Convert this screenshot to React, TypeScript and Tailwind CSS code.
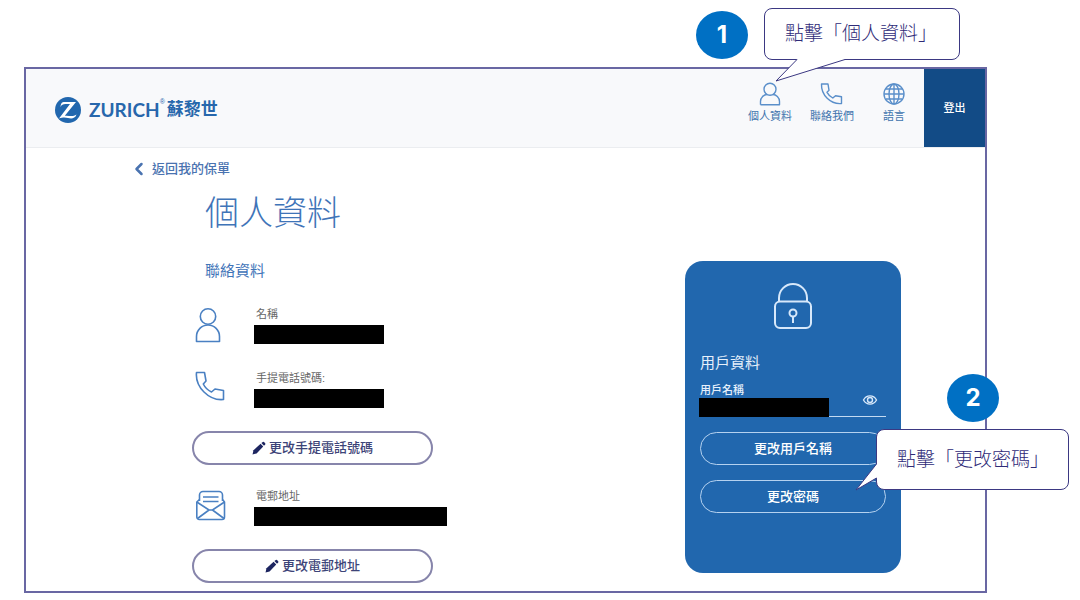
import { ChevronLeft } from "lucide-react";

export default function App() {
  return (
    <div className="bg-white pt-[67px] pl-6 pr-[93px] pb-[7px] font-['Liberation_Sans','Noto_Sans_CJK_TC',sans-serif]">
      <div className="relative border-2 border-[#6967a3]">
        <Header />

        <main className="pb-2">
          <a
            href="#policies"
            className="ml-[103px] mt-[11px] flex w-fit items-center gap-[3px] text-[13px] leading-5 font-medium text-[#4a73b0]"
          >
            <ChevronLeft className="size-5" strokeWidth={3} />
            返回我的保單
          </a>

          <h1 className="pl-[179px] mt-3 text-[34px] leading-11 font-light text-[#3f74b8]">
            個人資料
          </h1>

          <div className="flex justify-between items-start mt-[26px] pl-[166px] pr-21">
            <ContactDetails />
            <UserCard />
          </div>
        </main>

        <Step number={1} className="right-[237px] -top-[58px]" />
        <Callout
          className="right-[25px] -top-[61px] w-[196px] h-[52px]"
          text="點擊「個人資料」"
        >
          <svg
            className="absolute left-[10px] top-[49px] w-[72px] h-6"
            viewBox="0 0 72 24"
          >
            <path d="M22 0V1.5L1 23L70 1.5V0Z" fill="#fff" />
            <path d="M22 1.5L1 23L70 1.5" fill="none" stroke="#3b3882" />
          </svg>
        </Callout>

        <Step number={2} className="-right-[14px] top-[305px]" />
        <Callout
          className="-right-[84px] top-[360px] w-[193px] h-[61px]"
          text="點擊「更改密碼」"
        >
          <svg
            className="absolute -left-[22px] top-[33px] w-6 h-7"
            viewBox="0 0 24 28"
          >
            <path d="M24 1H21.5L1 27L21.5 15H24Z" fill="#fff" />
            <path d="M21.5 1L1 27L21.5 15" fill="none" stroke="#3b3882" />
          </svg>
        </Callout>
      </div>
    </div>
  );
}

function Header() {
  return (
    <header className="flex h-[79px] bg-[#f8f9fb] border-b border-[#ebedf0]">
      <div className="flex items-center grow pl-[29px] pt-1 text-[#2767ac]">
        <Logo />
        <span className="ml-2 font-['Lato'] text-[19px] leading-6 font-bold">
          ZURICH
        </span>
        <sup className="text-[7px] top-[-8px]">®</sup>
        <span className="ml-0.5 text-[17px] leading-6 font-bold">蘇黎世</span>
      </div>

      <nav className="flex items-start gap-[18px] mr-2 pt-[13px] text-[11px] leading-4 text-[#3f74ad]">
        <NavItem label="個人資料">
          <circle cx="12" cy="7.2" r="6" />
          <path d="M2.5 22.8V19.5C2.5 15.5 6 12.5 9 12.5M15 12.5C18 12.5 21.5 15.5 21.5 19.5V22.8H2.5" />
        </NavItem>
        <NavItem label="聯絡我們">
          <path d="M1.5 2H8L9 8.3L7 10.3C8.3 12.7 10.3 14.7 12.8 16L15.5 13.7L21.5 14.8V21.5C10.5 22.5 1 13 1.5 2Z" />
        </NavItem>
        <NavItem label="語言">
          <circle cx="12" cy="12" r="10" />
          <ellipse cx="12" cy="12" rx="5" ry="10" />
          <path d="M12 2V22M2 12H22M4 7H20M4 17H20" />
        </NavItem>
      </nav>

      <button className="w-[61px] bg-[#124b86] text-[11px] font-medium text-white">
        登出
      </button>
    </header>
  );
}

function NavItem({
  label,
  children,
}: React.PropsWithChildren<{ label: string }>) {
  return (
    <a
      href="#nav"
      className="flex flex-col items-center w-11 whitespace-nowrap"
    >
      <svg
        className="size-6 mb-0.5"
        viewBox="0 0 24 24"
        fill="none"
        stroke="#5a8fca"
        strokeWidth="1.4"
        strokeLinejoin="round"
      >
        {children}
      </svg>
      {label}
    </a>
  );
}

function Logo() {
  return (
    <svg className="size-[26px]" viewBox="0 0 26 26">
      <circle cx="13" cy="13" r="13" fill="#2167ae" />
      <path
        d="M5.5 10C5.8 6.3 7 5 9.5 5H21L9.8 18.8C14 18 17 20.6 21.5 17.5C20 22 16 21.8 13 21C10.5 20.3 8 20 4 21.5L15 7H10.5C8 7 6.5 7.8 5.5 10Z"
        fill="#fff"
      />
    </svg>
  );
}

function ContactDetails() {
  return (
    <section className="w-[255px]">
      <h2 className="pl-[13px] mb-[25px] text-[15px] leading-5 text-[#3f74b8]">
        聯絡資料
      </h2>

      <Field label="名稱" barClass="w-[130px]">
        <circle cx="13" cy="10.5" r="7.7" />
        <path d="M1.5 35.5V30.5a11.5 11.5 0 0 1 23 0v5Z" />
      </Field>

      <div className="h-[26px]" />

      <Field label="手提電話號碼:" barClass="w-[130px]">
        <path d="M1.5 2.5H9.5L11 11L8.3 14C10 17.5 12.8 20.3 16.5 22L20 19L28.5 20.5V29.5C14 31 0 17 1.5 2.5Z" />
      </Field>
      <EditButton>更改手提電話號碼</EditButton>

      <div className="h-[23px]" />

      <Field label="電郵地址" barClass="w-[193px]">
        <path d="M4.5 13V7a3.5 3.5 0 0 1 3.5-3.5H24a3.5 3.5 0 0 1 3.5 3.5V13" />
        <path d="M4.5 11.5L1.8 14V29a2.5 2.5 0 0 0 2.5 2.5H27a2.5 2.5 0 0 0 2.5-2.5V14L27.5 11.5" />
        <path d="M1.8 14L14 22H17.5L29.5 14M2.5 30.5L14 22M29 30.5L17.5 22M8 9H23.5M8 13.5H23.5" />
      </Field>
      <EditButton>更改電郵地址</EditButton>
    </section>
  );
}

function Field({
  label,
  barClass,
  children,
}: React.PropsWithChildren<{ label: string; barClass: string }>) {
  return (
    <div className="flex">
      <svg
        className="w-8 h-[38px] ml-[3px] mr-[27px] shrink-0"
        viewBox="0 0 32 38"
        fill="none"
        stroke="#4a80c2"
        strokeWidth="1.6"
        strokeLinejoin="round"
      >
        {children}
      </svg>
      <div>
        <p className="pl-0.5 mb-[3px] text-[11px] leading-4 text-[#666]">
          {label}
        </p>
        {/* value is hidden */}
        <div className={`${barClass} h-[19px] bg-black`} />
      </div>
    </div>
  );
}

function EditButton({ children }: React.PropsWithChildren) {
  return (
    <button className="flex items-center justify-center gap-[3px] mt-[23px] w-[241px] h-[34px] rounded-full border-2 border-[#8785ab] text-[13px] font-medium text-[#3d4478]">
      <svg className="size-[14px]" viewBox="0 0 14 14" fill="#1d2560">
        <path d="M.5 13.5L1.5 9.2L8.6 2.8L11.2 5.5L4.6 12.4Z" />
        <path d="M9.4 2.1L10.8.9Q11.4.5 12 1L13.2 2.3Q13.6 2.9 13.2 3.4L12 4.8Z" />
      </svg>
      {children}
    </button>
  );
}

function UserCard() {
  return (
    <section className="w-[216px] px-[15px] pt-[22px] pb-15 rounded-[18px] bg-[#2167ae] text-[#e6f0fb]">
      <svg
        className="mx-auto w-[38px] h-[46px]"
        viewBox="0 0 38 46"
        fill="none"
        stroke="#d7e8fa"
        strokeWidth="2"
      >
        <rect x="1" y="18.5" width="36" height="26.5" rx="5" />
        <path d="M5 18.5V15a14 14 0 0 1 28 0v3.5" />
        <circle cx="19" cy="30" r="3.5" />
        <path d="M19 33.5V40" />
      </svg>

      <h2 className="mt-6 text-[15px] leading-5">用戶資料</h2>

      <p className="mt-[9px] text-[11px] leading-4 font-medium">用戶名稱</p>
      <div className="flex -ml-px">
        <div className="w-[130px] h-[19px] bg-black" />
        <div className="flex justify-end grow pr-2 border-b border-[#c3daf2]">
          <button aria-label="顯示" className="self-start -mt-1">
            <svg
              className="w-4 h-3"
              viewBox="0 0 16 12"
              fill="none"
              stroke="#d7e8fa"
              strokeWidth="1.4"
            >
              <path d="M1.5 6C4.5 .5 11.5 .5 14.5 6C11.5 11.5 4.5 11.5 1.5 6Z" />
              <circle cx="8" cy="6" r="2.5" />
            </svg>
          </button>
        </div>
      </div>

      <CardButton>更改用戶名稱</CardButton>
      <CardButton>更改密碼</CardButton>
    </section>
  );
}

function CardButton({ children }: React.PropsWithChildren) {
  return (
    <button className="block w-full h-[33px] mt-[15px] rounded-full border border-[#b5d2f0] text-[13px] font-medium text-white">
      {children}
    </button>
  );
}

function Step({ number, className }: { number: number; className: string }) {
  return (
    <div
      className={`${className} absolute flex items-center justify-center w-[52px] h-12 rounded-[50%] bg-[#0070c4] font-['Inter'] text-2xl font-bold text-white`}
    >
      {number}
    </div>
  );
}

function Callout({
  text,
  className,
  children,
}: React.PropsWithChildren<{ text: string; className: string }>) {
  return (
    <div
      className={`${className} absolute flex items-center pl-5 rounded-lg border border-[#3b3882] bg-white text-[19px] leading-7 font-light whitespace-nowrap text-[#2f2b78]`}
    >
      {text}
      {children}
    </div>
  );
}
